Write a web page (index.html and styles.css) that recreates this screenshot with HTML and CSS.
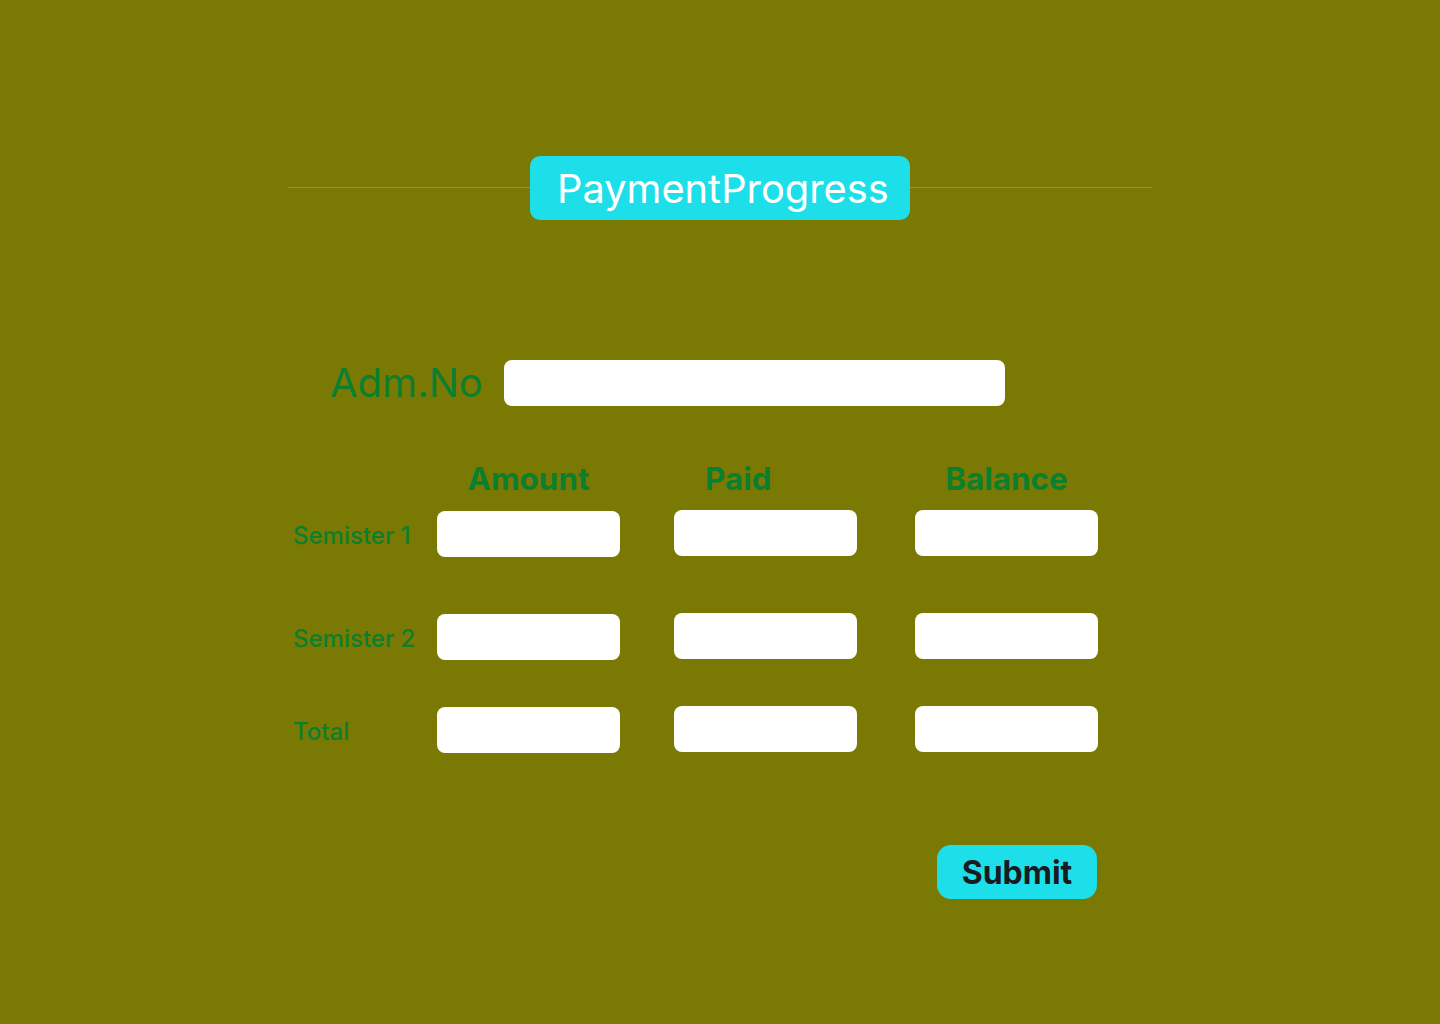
FILE: index.html
```html
<!DOCTYPE html>
<html lang="en">
<head>
<meta charset="utf-8">
<title>PaymentProgress</title>
<link rel="stylesheet" href="styles.css">
</head>
<body>
<main class="page">
  <header class="title-row">
    <span class="line"></span>
    <h1 class="title">PaymentProgress</h1>
    <span class="line"></span>
  </header>

  <div class="adm-row">
    <label class="adm-label" for="adm">Adm.No</label>
    <input class="adm-input" id="adm" type="text">
  </div>

  <div class="table">
    <span></span>
    <span class="head">Amount</span>
    <span class="head head-paid">Paid</span>
    <span class="head">Balance</span>

    <span class="row-label">Semister 1</span>
    <input class="cell cell-low" type="text">
    <input class="cell" type="text">
    <input class="cell" type="text">

    <span class="row-label">Semister 2</span>
    <input class="cell cell-low" type="text">
    <input class="cell" type="text">
    <input class="cell" type="text">

    <span class="row-label">Total</span>
    <input class="cell cell-low" type="text">
    <input class="cell" type="text">
    <input class="cell" type="text">
  </div>

  <div class="actions">
    <button class="submit" type="button">Submit</button>
  </div>
</main>
</body>
</html>
```
FILE: styles.css
```css
* { box-sizing: border-box; }
html, body { margin: 0; }
body {
  background: #797903;
  font-family: Inter, "Noto Sans", sans-serif;
  min-height: 1024px;
}
.page {
  width: 864px;
  margin: 0 auto;
  padding-top: 156px;
}
.title-row {
  display: flex;
  align-items: center;
}
.line {
  flex: 1;
  height: 1px;
  background: #4fb53a;
  margin-top: -2px;
}
.title {
  margin: 0;
  width: 380px;
  height: 64px;
  background: #1ddfea;
  border-radius: 10px;
  color: #ffffff;
  font-weight: 400;
  font-size: 39.8px;
  line-height: 66px;
  padding-left: 27px;
}
.adm-row {
  display: flex;
  align-items: center;
  margin-top: 140px;
  padding-left: 42px;
}
.adm-label {
  width: 174px;
  color: #0c7f2e;
  font-size: 40px;
  line-height: 46px;
}
.adm-input {
  width: 501px;
  height: 46px;
  border: none;
  border-radius: 8px;
  background: #ffffff;
  outline: none;
}
.table {
  display: grid;
  grid-template-columns: 144px 237px 241px 183px;
  grid-template-rows: 50px 103px 93px 46px;
  margin-top: 54px;
  padding-left: 5px;
  align-items: start;
}
.head {
  width: 183px;
  text-align: center;
  color: #0c7f2e;
  font-weight: 700;
  font-size: 31.4px;
  line-height: 36px;
  margin-top: 1px;
}
.head-paid {
  text-align: left;
  padding-left: 31px;
}
.row-label {
  color: #0c7f2e;
  font-size: 24px;
  font-weight: 500;
  line-height: 46px;
  margin-top: 3px;
}
.cell {
  width: 183px;
  height: 46px;
  border: none;
  border-radius: 8px;
  background: #ffffff;
  outline: none;
  margin: 0;
}
.cell-low { transform: translateY(1px); }
.actions {
  display: flex;
  justify-content: flex-end;
  padding-right: 55px;
  margin-top: 93px;
}
.submit {
  width: 160px;
  height: 54px;
  border: none;
  border-radius: 14px;
  background: #1ddfea;
  color: #1b1b1f;
  font-family: Inter, "Noto Sans", sans-serif;
  font-weight: 700;
  font-size: 32px;
  padding: 0;
}
```
